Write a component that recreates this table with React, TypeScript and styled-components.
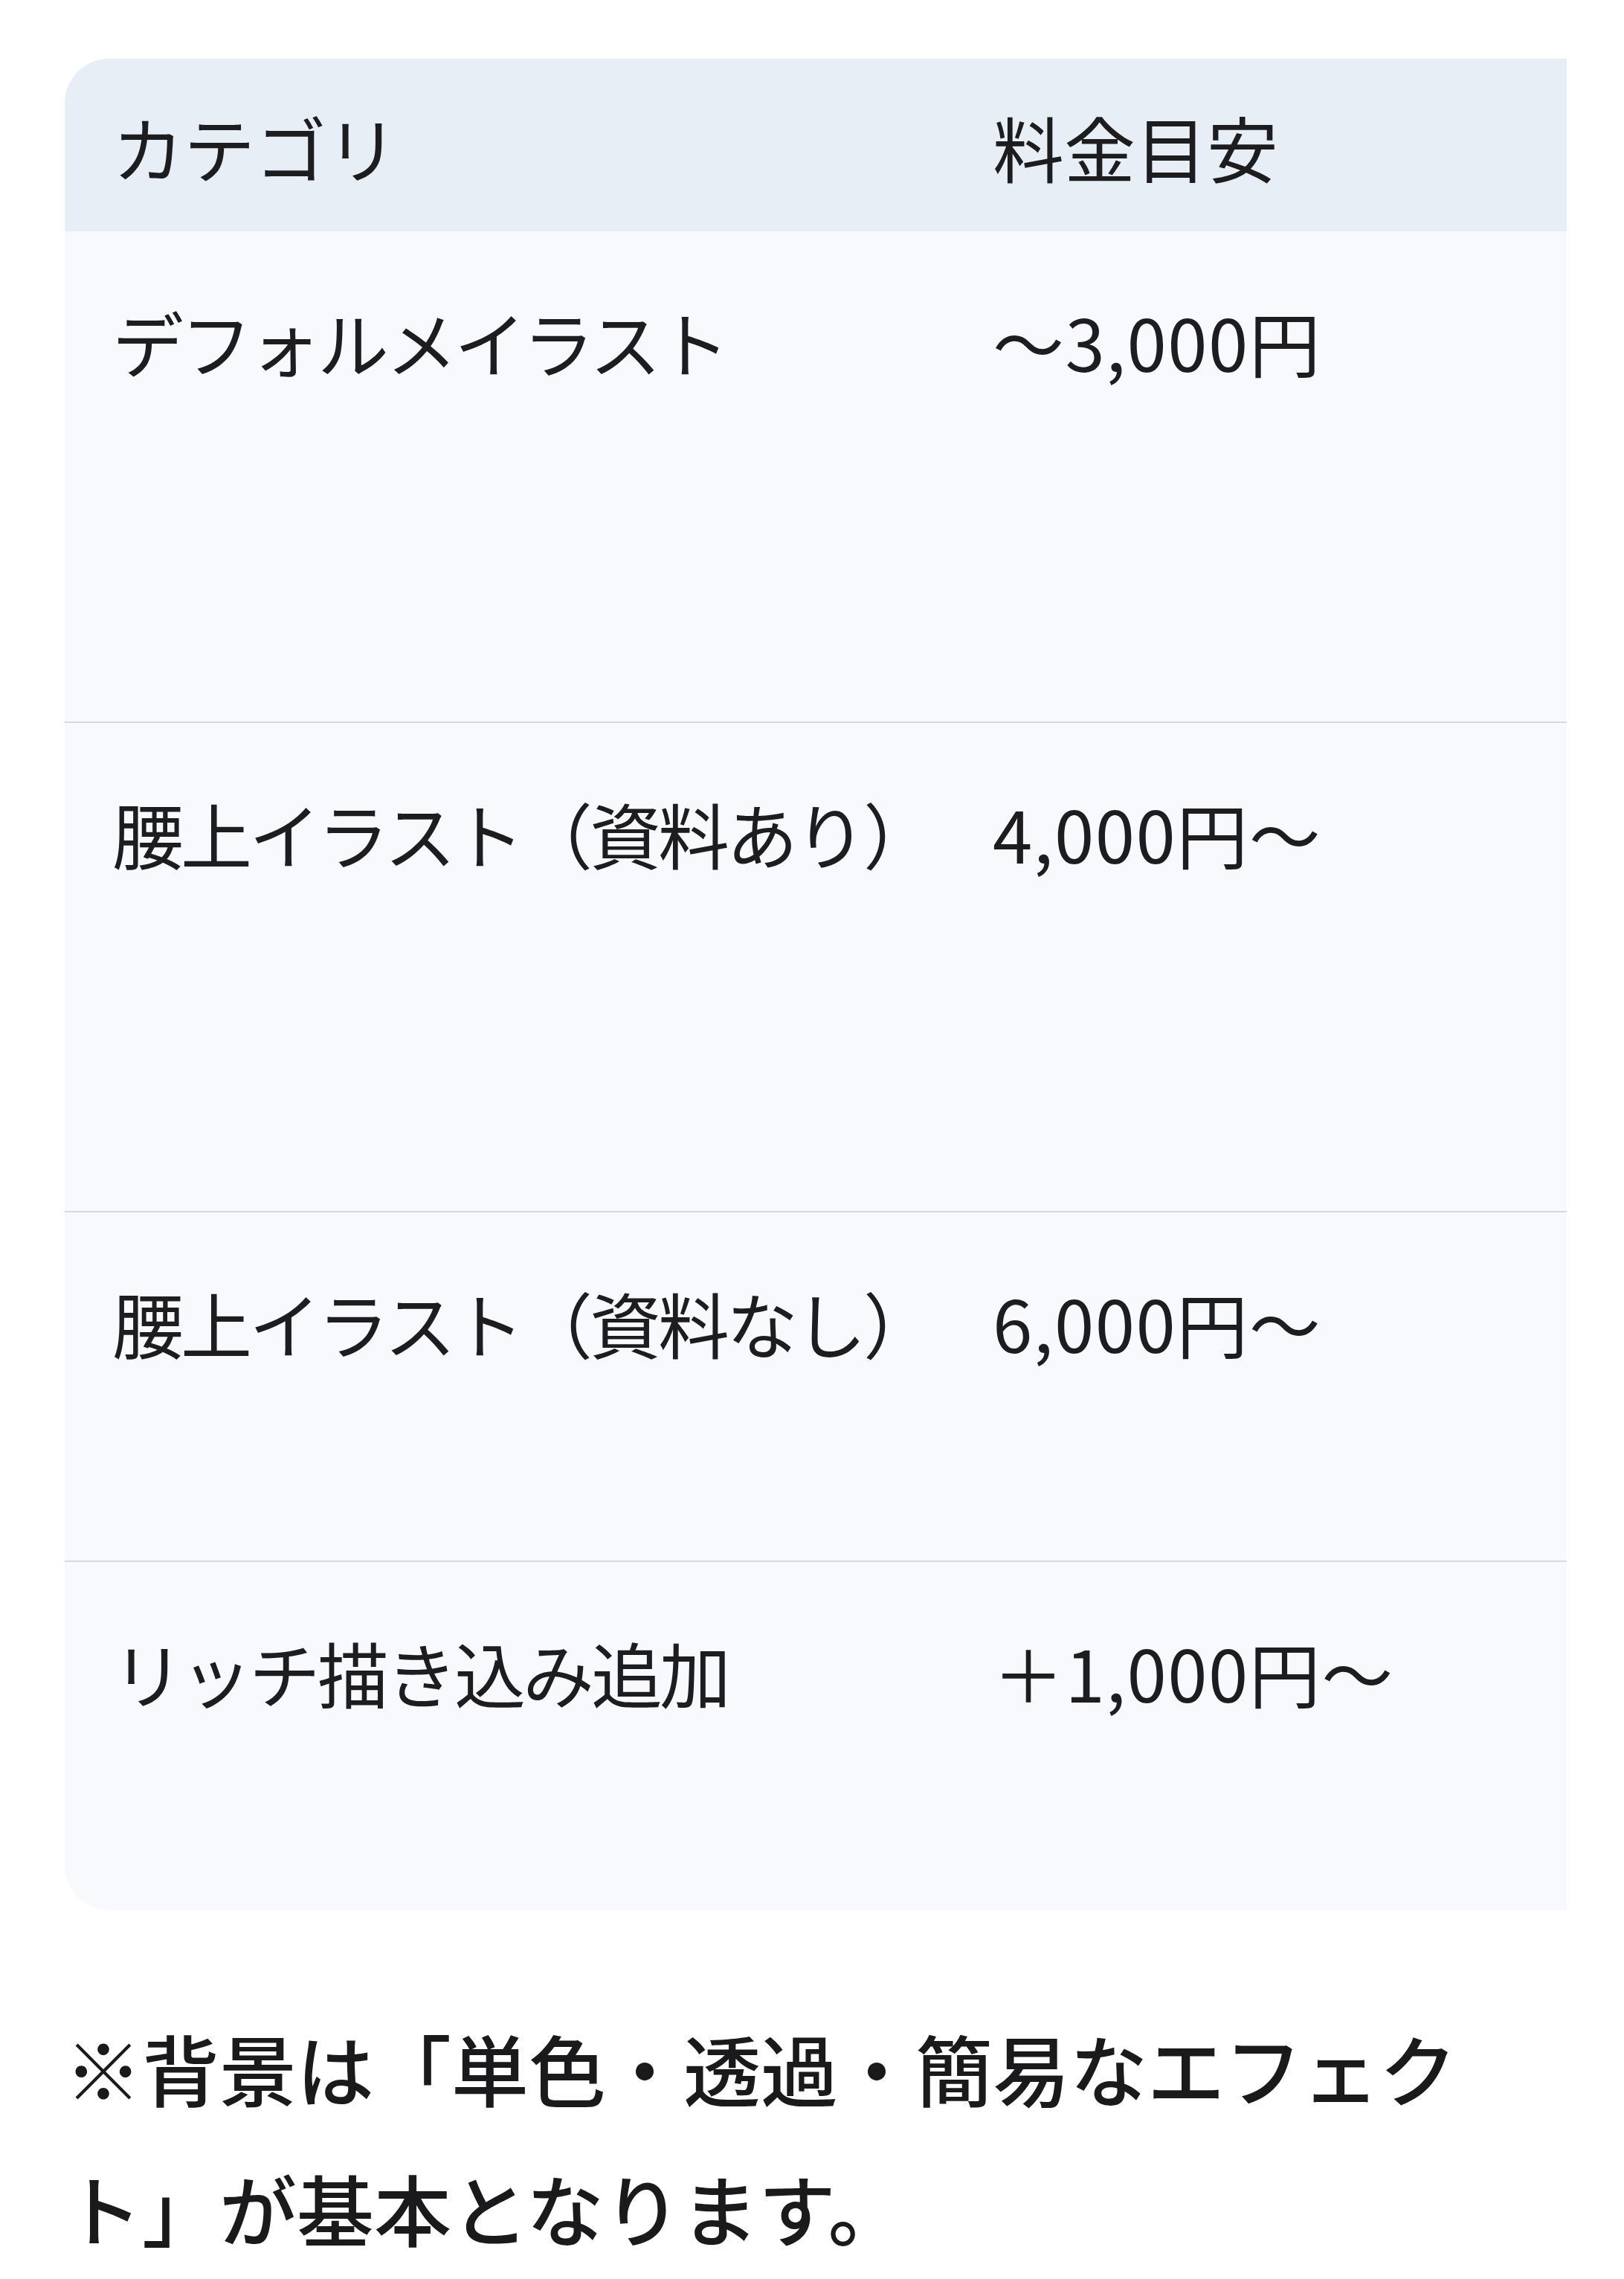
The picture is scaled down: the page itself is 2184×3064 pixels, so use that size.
import styled, { createGlobalStyle } from "styled-components";

const GlobalStyle = createGlobalStyle`
  html, body {
    margin: 0;
    padding: 0;
    background: #ffffff;
  }
  body {
    font-family: "Noto Sans CJK JP", "Noto Sans", sans-serif;
    color: #1d1d1f;
  }
`;

const Page = styled.main`
  padding: 79px 77px 40px 87px;
`;

const TableScroll = styled.div`
  width: 2020px;
  overflow: hidden;
`;

const Table = styled.div`
  width: 2300px;
  border-radius: 60px;
  overflow: hidden;
  background: #f7f9fd;
`;

const HeaderRow = styled.div`
  display: grid;
  grid-template-columns: 1184px 1fr;
  background: #e8eef6;
  height: 232px;
  box-sizing: border-box;
  padding-top: 46px;
`;

const BodyRow = styled.div<{ $height: number; $last?: boolean }>`
  display: grid;
  grid-template-columns: 1184px 1fr;
  height: ${({ $height }) => $height}px;
  box-sizing: border-box;
  padding-top: 76px;
  border-bottom: ${({ $last }) => ($last ? "none" : "2px solid #d6d9de")};
`;

const Cell = styled.div`
  padding: 0 64px;
  font-size: 96px;
  line-height: 1.5;
  font-weight: 400;
  white-space: nowrap;
`;

const CategoryCell = styled(Cell)`
  letter-spacing: -4px;
`;

const PriceCell = styled(Cell)`
  letter-spacing: 1.5px;
`;

const Note = styled.p`
  width: 2020px;
  margin: 118px 0 0;
  font-size: 104px;
  line-height: 188px;
  font-weight: 500;
  color: #1a1a1c;
`;

const rows = [
  { category: "デフォルメイラスト", price: "～3,000円", height: 661 },
  { category: "腰上イラスト（資料あり）", price: "4,000円～", height: 658 },
  { category: "腰上イラスト（資料なし）", price: "6,000円～", height: 470 },
  { category: "リッチ描き込み追加", price: "＋1,000円～", height: 468 },
];

export default function App() {
  return (
    <>
      <GlobalStyle />
      <Page>
        <TableScroll>
          <Table>
            <HeaderRow>
              <Cell>カテゴリ</Cell>
              <Cell>料金目安</Cell>
            </HeaderRow>
            {rows.map((row, i) => (
              <BodyRow key={i} $height={row.height} $last={i === rows.length - 1}>
                <CategoryCell>{row.category}</CategoryCell>
                <PriceCell>{row.price}</PriceCell>
              </BodyRow>
            ))}
          </Table>
        </TableScroll>
        <Note>※背景は「単色・透過・簡易なエフェクト」が基本となります。</Note>
      </Page>
    </>
  );
}
